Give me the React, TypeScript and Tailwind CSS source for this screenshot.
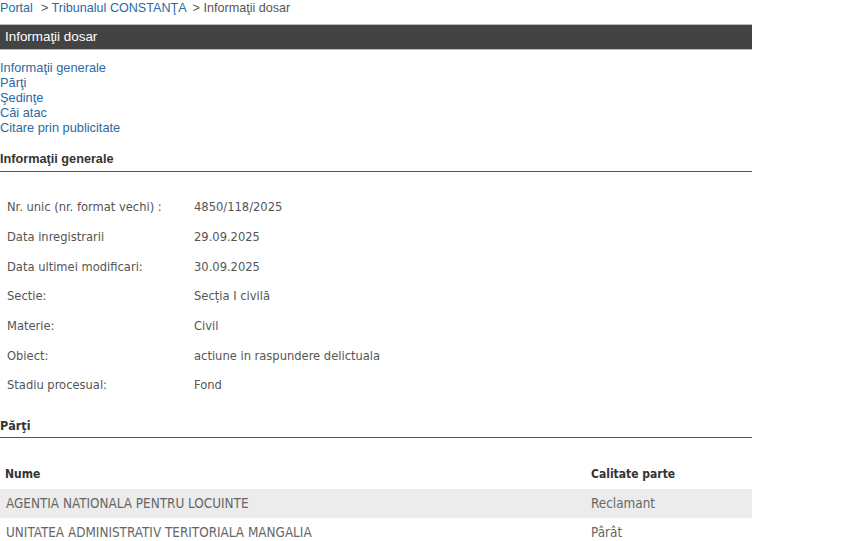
import React from "react";

const info: [string, string][] = [
  ["Nr. unic (nr. format vechi) :", "4850/118/2025"],
  ["Data inregistrarii", "29.09.2025"],
  ["Data ultimei modificari:", "30.09.2025"],
  ["Sectie:", "Secția I civilă"],
  ["Materie:", "Civil"],
  ["Obiect:", "actiune in raspundere delictuala"],
  ["Stadiu procesual:", "Fond"],
];

const parti: [string, string][] = [
  ["AGENTIA NATIONALA PENTRU LOCUINTE", "Reclamant"],
  ["UNITATEA ADMINISTRATIV TERITORIALA MANGALIA", "Pârât"],
];

const links = [
  "Informaţii generale",
  "Părţi",
  "Şedinţe",
  "Căi atac",
  "Citare prin publicitate",
];

export default function App() {
  return (
    <div className="w-[855px] h-[541px] overflow-hidden bg-white font-['Liberation_Sans',Arial,sans-serif]">
      <div className="w-[752px]">
        {/* Breadcrumb */}
        <div className="h-[24px] pt-[1px] text-[12.6px] leading-[14px] text-[#555]">
          <span className="text-[#2a6aa3]">Portal</span>
          <span className="ml-[8px]">&gt; </span>
          <span className="text-[#2a6aa3]">Tribunalul CONSTANŢA</span>
          <span className="ml-[6px]">&gt; Informaţii dosar</span>
        </div>

        {/* Title bar */}
        <div className="h-[26px] bg-[#444343] border-y border-[#bdbdbd] px-[5px] text-[13.4px] leading-[24px] text-white">
          Informaţii dosar
        </div>

        {/* Anchor links */}
        <div className="mt-[10px] flex flex-col text-[12.8px] leading-[15px] text-[#2a6aa3]">
          {links.map((l) => (
            <span key={l}>{l}</span>
          ))}
        </div>

        {/* Informatii generale */}
        <div className="mt-[17px] pb-[4px] border-b border-[#555] text-[12.7px] leading-[15px] font-bold text-[#333]">
          Informaţii generale
        </div>
        <div className="mt-[20px] flex flex-col font-['DejaVu_Sans_Condensed','DejaVu_Sans',sans-serif] text-[12.8px] text-[#555]">
          {info.map(([k, v]) => (
            <div key={k} className="flex h-[29.7px] items-center">
              <span className="w-[194px] pl-[7px]">{k}</span>
              <span>{v}</span>
            </div>
          ))}
        </div>

        {/* Parti */}
        <div className="mt-[18px] pb-[4px] border-b border-[#555] text-[12.5px] leading-[15px] font-bold text-[#333] font-['DejaVu_Sans_Condensed',sans-serif]">
          Părţi
        </div>
        <div className="mt-[21px] font-['DejaVu_Sans_Condensed',sans-serif] text-[12px]">
          <div className="flex h-[30px] items-center font-bold text-[#333]">
            <span className="flex-1 pl-[5px]">Nume</span>
            <span className="w-[161px]">Calitate parte</span>
          </div>
          {parti.map(([n, c], i) => (
            <div
              key={n}
              className={`flex h-[29.5px] items-center text-[13.4px] text-[#666] ${i === 0 ? "bg-[#ececec]" : ""}`}
            >
              <span className="flex-1 pl-[6px]">{n}</span>
              <span className="w-[161px]">{c}</span>
            </div>
          ))}
        </div>
      </div>
    </div>
  );
}
